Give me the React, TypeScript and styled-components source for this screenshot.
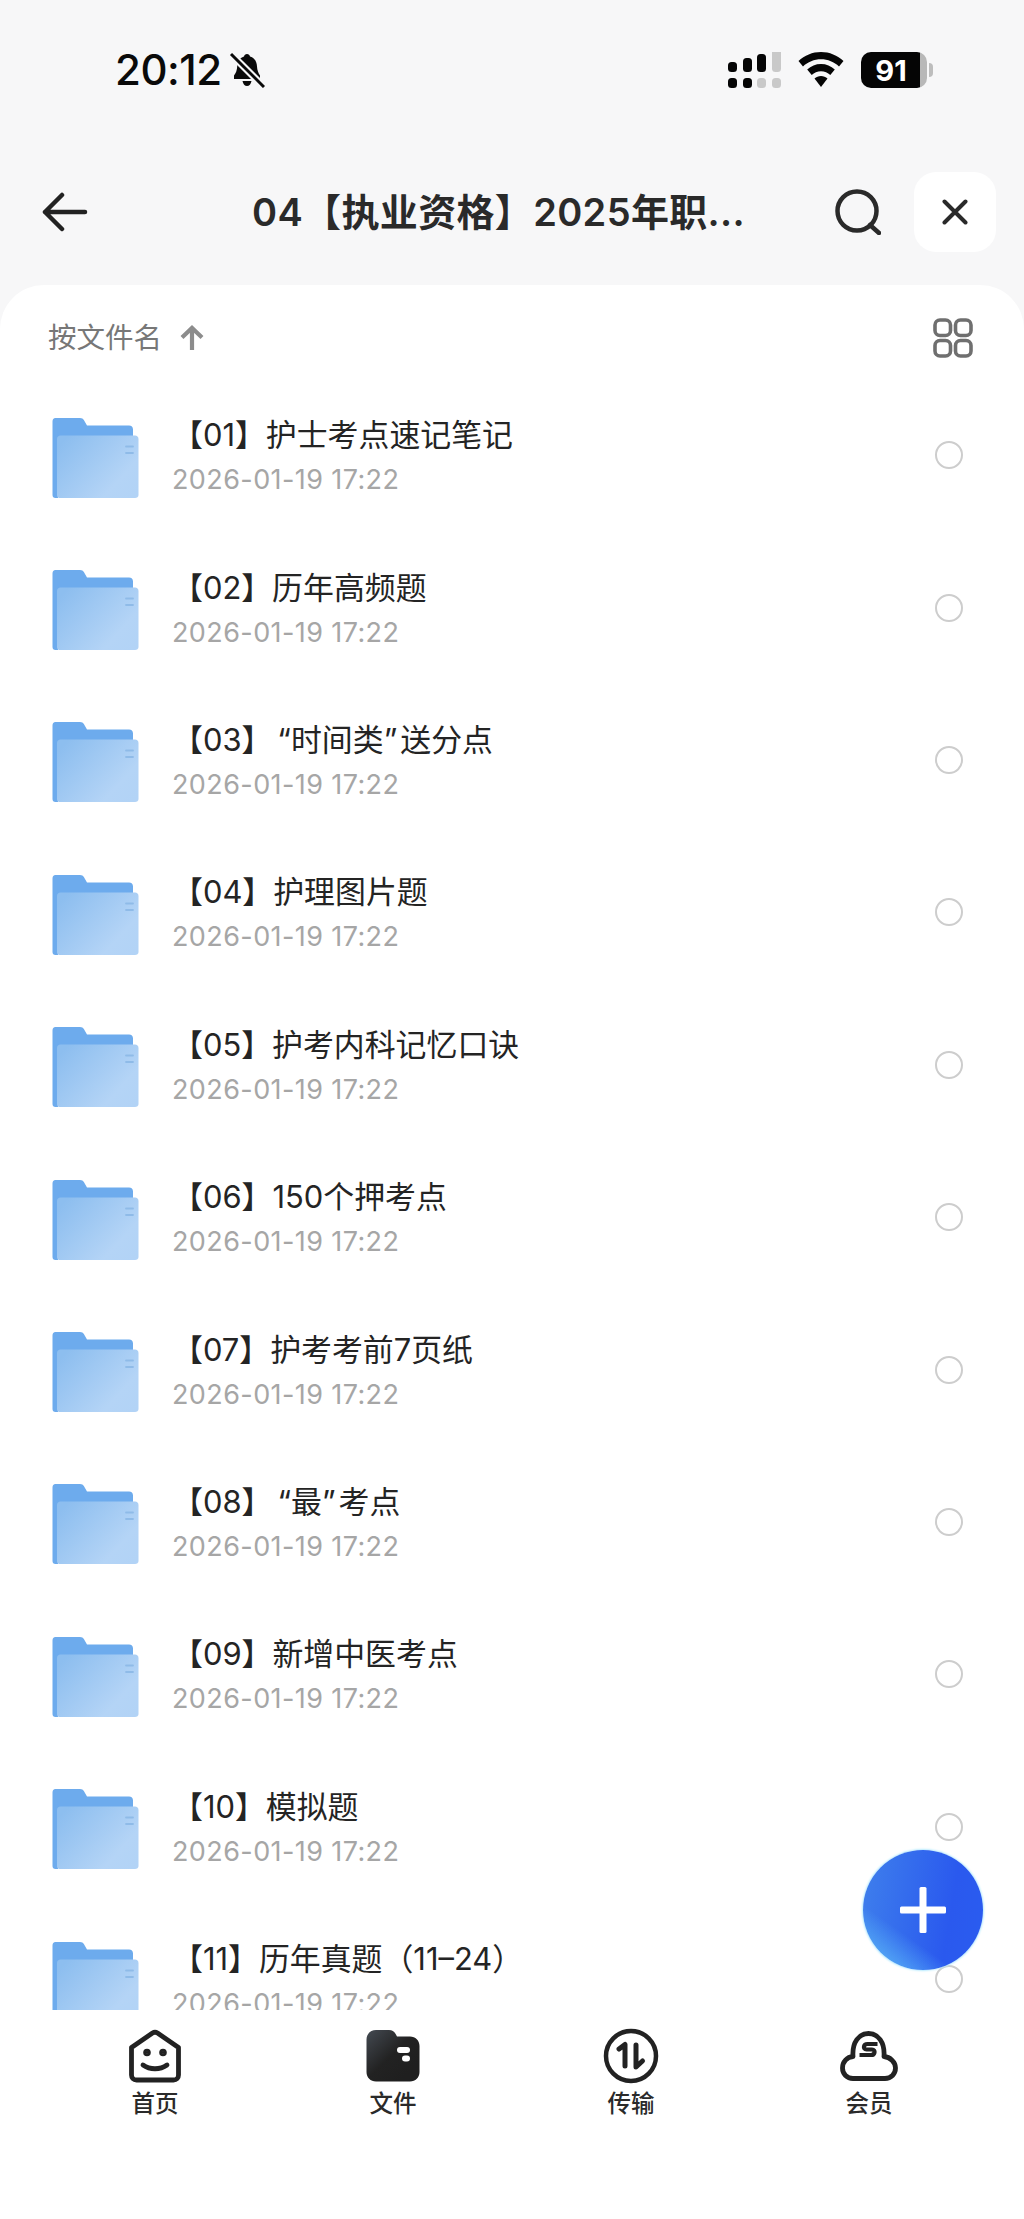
import React from "react";
import styled, { createGlobalStyle } from "styled-components";

const GlobalStyle = createGlobalStyle`
  html, body {
    margin: 0;
    padding: 0;
    background: #f7f7f8;
  }
  * {
    box-sizing: border-box;
  }
`;

const FONT = `Inter, "Noto Sans CJK SC", sans-serif`;

const Page = styled.div`
  position: relative;
  display: flex;
  flex-direction: column;
  width: 1024px;
  height: 2219px;
  overflow: hidden;
  background: #f7f7f8;
  font-family: ${FONT};
  color: #222;
`;

const StatusBar = styled.div`
  display: flex;
  align-items: center;
  height: 140px;
  padding: 0 97px 0 115px;
`;

const Time = styled.div`
  font-size: 42px;
  font-weight: 500;
  line-height: 1;
  letter-spacing: -0.5px;
  color: #0a0a0a;
  margin-right: 7px;
`;

const StatusRight = styled.div`
  display: flex;
  align-items: center;
  gap: 17px;
  margin-left: auto;
`;

const Battery = styled.div`
  position: relative;
  display: flex;
  align-items: center;
  justify-content: center;
  width: 66px;
  height: 36px;
  padding-right: 6px;
  border-radius: 10px;
  background: linear-gradient(90deg, #050505 0, #050505 90%, #b8b8b8 90%);
  color: #fff;
  font-size: 29px;
  font-weight: 700;
  line-height: 1;

  &::after {
    content: "";
    position: absolute;
    right: -6px;
    top: 11px;
    width: 4px;
    height: 14px;
    border-radius: 0 4px 4px 0;
    background: #bdbdbd;
  }
`;

const NavBar = styled.div`
  display: flex;
  align-items: center;
  height: 145px;
  padding: 0 28px 2px 42px;
`;

const Title = styled.div`
  width: 500px;
  margin-left: 164px;
  font-size: 38px;
  font-weight: 600;
  line-height: 1;
  letter-spacing: 0.35px;
  white-space: nowrap;
  color: #2a2a2a;
`;

const SearchButton = styled.div`
  display: flex;
  margin-left: auto;
  margin-right: 33px;
`;

const CloseButton = styled.div`
  display: flex;
  align-items: center;
  justify-content: center;
  width: 82px;
  height: 80px;
  border-radius: 22px;
  background: #fff;
`;

const Sheet = styled.div`
  flex: 1;
  min-height: 0;
  overflow: hidden;
  border-radius: 44px 44px 0 0;
  background: #fff;
`;

const SortBar = styled.div`
  display: flex;
  align-items: center;
  height: 94px;
  padding: 12px 51px 0 48px;
`;

const SortLabel = styled.span`
  font-size: 28.5px;
  line-height: 1;
  color: #777;
  margin-right: 18px;
`;

const ViewToggle = styled.div`
  display: flex;
  margin-left: auto;
`;

const Row = styled.div`
  display: flex;
  align-items: center;
  height: 152.4px;
  padding: 0 61px 0 52px;
`;

const FolderSlot = styled.div`
  display: flex;
  margin-top: 5px;
`;

const RowText = styled.div`
  display: flex;
  flex-direction: column;
  flex: 1;
  margin-left: 33px;
  gap: 14px;
`;

const RowTitle = styled.div`
  font-size: 30.9px;
  line-height: 36px;
  color: #242424;
  white-space: nowrap;
`;

const QuoteMark = styled.span<{ $open?: boolean }>`
  padding: ${(p) => (p.$open ? "0 0 0 5px" : "0 3px 0 0")};
`;

const RowDate = styled.div`
  font-size: 27px;
  line-height: 26px;
  letter-spacing: 0.4px;
  color: #a6a6a6;
`;

const Radio = styled.div`
  width: 28px;
  height: 28px;
  border: 2.5px solid #cdcdcd;
  border-radius: 50%;
`;

const Fab = styled.div`
  position: absolute;
  left: 863px;
  top: 1850px;
  display: flex;
  align-items: center;
  justify-content: center;
  width: 120px;
  height: 120px;
  border-radius: 50%;
  background:
    linear-gradient(35deg, #62c4fa 0%, rgba(98, 196, 250, 0) 32%),
    linear-gradient(100deg, #3f80ec 0%, #2a59ee 70%, #2a5cf0 100%);
  box-shadow: 0 0 2px 1px #b5eaff;
`;

const TabBar = styled.div`
  display: grid;
  grid-template-columns: repeat(4, 238px);
  flex: none;
  height: 209px;
  padding: 17px 36px 0;
  background: #fff;
`;

const Tab = styled.div`
  display: flex;
  flex-direction: column;
  align-items: center;
  gap: 3px;
`;

const TabIcon = styled.div`
  display: flex;
  align-items: center;
  justify-content: center;
  height: 58px;
`;

const TabLabel = styled.div`
  font-size: 23.5px;
  font-weight: 500;
  line-height: 32px;
  color: #2a2a2a;
`;

function BellOff() {
  return (
    <svg width="36" height="36" viewBox="0 0 36 36">
      <path
        d="M18 2c1.600 0 2.700 1 3 2.400 4.600 1.400 6.800 5.400 7 10.100.2 3.900 1.400 6.700 3 9v3.500H5v-3.500c2-2.500 3-5.300 3.200-9C8.400 9.800 10.400 5.800 15 4.400 15.300 3 16.400 2 18 2z"
        fill="#0a0a0a"
      />
      <path d="M13.500 29h9c-.5 3-2.300 5-4.500 5s-4-2-4.500-5z" fill="#0a0a0a" />
      <path d="M2 2l33 33" stroke="#f7f7f8" strokeWidth="7" />
      <path d="M2 2l33 33" stroke="#0a0a0a" strokeWidth="3" />
    </svg>
  );
}

const signalBars = [
  { x: 0, h: 10, c: "#050505" },
  { x: 15, h: 14, c: "#050505" },
  { x: 29, h: 18, c: "#050505" },
  { x: 44, h: 26, c: "#c9c9c9" },
];

function Signal() {
  return (
    <svg width="53" height="36" viewBox="0 0 53 36">
      {signalBars.map((b) => (
        <React.Fragment key={b.x}>
          <rect x={b.x} y={22 - b.h - 2} width="9" height={b.h} rx="3.500" fill={b.c} />
          <rect x={b.x} y="26" width="9" height="10" rx="3.500" fill={b.x > 20 ? "#c9c9c9" : b.c} />
        </React.Fragment>
      ))}
    </svg>
  );
}

function Wifi() {
  return (
    <svg width="46" height="36" viewBox="0 0 46 36">
      <path d="M23 0c8.500 0 16.500 3.400 22.500 9L41 14.500C36.200 10 29.800 7.300 23 7.300S9.800 10 5 14.500L.5 9C6.500 3.400 14.500 0 23 0z" fill="#050505" />
      <path d="M23 12c5.300 0 10 2 13.800 5.500L32.300 23c-2.500-2.300-5.700-3.700-9.300-3.700S16.200 20.700 13.700 23l-4.500-5.500C13 14 17.700 12 23 12z" fill="#050505" />
      <path d="M23 24c2.500 0 4.700.9 6.500 2.400L23 35l-6.500-8.600c1.800-1.500 4-2.400 6.500-2.400z" fill="#050505" />
    </svg>
  );
}

function BackArrow() {
  return (
    <svg width="46" height="40" viewBox="0 0 46 40" fill="none" stroke="#222" strokeWidth="4.500" strokeLinecap="round" strokeLinejoin="round">
      <path d="M43 20H3M20 3L3 20l17 17" />
    </svg>
  );
}

function SearchIcon() {
  return (
    <svg width="46" height="46" viewBox="0 0 46 46" fill="none" stroke="#2a2a2a" strokeWidth="4.500" strokeLinecap="round">
      <circle cx="22" cy="22" r="19.500" />
      <path d="M35 36l9 8" />
    </svg>
  );
}

function CloseIcon() {
  return (
    <svg width="26" height="26" viewBox="0 0 26 26" fill="none" stroke="#2a2a2a" strokeWidth="4" strokeLinecap="round">
      <path d="M2.500 2.500l21 21M23.500 2.500l-21 21" />
    </svg>
  );
}

function SortArrow() {
  return (
    <svg width="24" height="26" viewBox="0 0 24 26" fill="none" stroke="#8c8c8c" strokeWidth="4.200">
      <path d="M12 25V4M2 12.500L12 3l10 9.500" />
    </svg>
  );
}

function GridIcon() {
  return (
    <svg width="40" height="40" viewBox="0 0 40 40" fill="none" stroke="#6f6f6f" strokeWidth="3.600">
      <rect x="2" y="2" width="15.500" height="15.500" rx="5" />
      <rect x="22.500" y="2" width="15.500" height="15.500" rx="5" />
      <rect x="2" y="22.500" width="15.500" height="15.500" rx="5" />
      <rect x="22.500" y="22.500" width="15.500" height="15.500" rx="5" />
    </svg>
  );
}

function FolderIcon({ id }: { id: number }) {
  return (
    <svg width="87" height="80" viewBox="0 0 87 80">
      <defs>
        <linearGradient id={`front${id}`} x1="0" y1="0.2" x2="1" y2="0.9">
          <stop offset="0" stopColor="#8dbeef" />
          <stop offset="0.75" stopColor="#b4d4f6" />
          <stop offset="1" stopColor="#b2d3f6" />
        </linearGradient>
      </defs>
      <path
        d="M3.500 0H28c2 0 3 .8 4 2.300L35 7.500h42c2.500 0 4 1.500 4 4V30H6v50H3.500C1.500 80 .5 79 .5 77V3.500C.5 1.500 1.500 0 3.500 0z"
        fill="#6dabed"
      />
      <path
        d="M8.500 17.500H83c2 0 3.500 1.500 3.500 3.500v56c0 2-1.500 3-3.500 3H7.500C6 80 5 79 5 77V21c0-2 1.500-3.500 3.500-3.500z"
        fill={`url(#front${id})`}
      />
      <path d="M74 28.500h7M74 35h7" stroke="#8fbbe8" strokeWidth="1.800" strokeLinecap="round" />
    </svg>
  );
}

function PlusIcon() {
  return (
    <svg width="46" height="46" viewBox="0 0 46 46" fill="#fff">
      <rect x="19.500" y="0" width="7" height="46" rx="1.500" />
      <rect x="0" y="19.500" width="46" height="7" rx="1.500" />
    </svg>
  );
}

function HomeTab() {
  return (
    <svg width="54" height="54" viewBox="0 0 54 54" fill="none" stroke="#222" strokeWidth="4.800" strokeLinejoin="round" strokeLinecap="round">
      <path d="M3.500 18.500L24.500 4c1.600-1 3.400-1 5 0l21 14.500V46c0 3-2 5-5 5H8.500c-3 0-5-2-5-5z" />
      <path d="M15 36c7 5 17 5 24 0" />
      <circle cx="19" cy="23.500" r="1.400" fill="#222" />
      <circle cx="35" cy="23.500" r="1.400" fill="#222" />
    </svg>
  );
}

function FilesTab() {
  return (
    <svg width="54" height="52" viewBox="0 0 54 52">
      <defs>
        <linearGradient id="filesFill" x1="0" y1="0" x2="0.8" y2="0.8">
          <stop offset="0" stopColor="#444a52" />
          <stop offset="0.6" stopColor="#222222" />
          <stop offset="1" stopColor="#1f1f1f" />
        </linearGradient>
      </defs>
      <path
        d="M10 0h13c4 0 6 2 8 6.500h13c5.500 0 9.500 4 9.500 9.500v26c0 5.500-4 9.500-9.500 9.500H10C4.500 51.500.5 47.500.5 42V9.500C.5 4 4.500 0 10 0z"
        fill="url(#filesFill)"
      />
      <rect x="31" y="17" width="13" height="6" rx="3" fill="#fff" />
      <rect x="36" y="25.500" width="8" height="6" rx="3" fill="#fff" />
    </svg>
  );
}

function TransferTab() {
  return (
    <svg width="56" height="56" viewBox="0 0 56 56" fill="none" stroke="#222" strokeLinecap="round" strokeLinejoin="round">
      <circle cx="28" cy="28" r="25" strokeWidth="4.500" />
      <path d="M16 21l6-4.500V38" strokeWidth="5" />
      <path d="M33 17v22l6.500-6" strokeWidth="5" />
    </svg>
  );
}

function MemberTab() {
  return (
    <svg width="58" height="50" viewBox="0 0 58 50" fill="none" stroke="#222" strokeLinecap="round" strokeLinejoin="round">
      <path d="M13 47.500C7 47.500 2.500 43 2.500 37c0-6 4.500-11 10.500-11.500C12 11 19 2.500 28.500 2.500S45 11 44 25.500c6 .5 11.500 5.500 11.500 11.500 0 6-4.500 10.500-10.500 10.500z" strokeWidth="4.800" />
      <path d="M37.500 13H27.500c-2 0-3.200 1-3.500 2.500-.3 1.500.5 3 2.500 3h5.500c2 0 2.800 1.500 2.500 3-.3 1.500-1.500 2.500-3.500 2.500H19.500" strokeWidth="4.200" strokeLinecap="butt" />
    </svg>
  );
}

const rows: React.ReactNode[] = [
  "【01】护士考点速记笔记",
  "【02】历年高频题",
  <>
    【03】<QuoteMark $open>“</QuoteMark>时间类<QuoteMark>”</QuoteMark>送分点
  </>,
  "【04】护理图片题",
  "【05】护考内科记忆口诀",
  "【06】150个押考点",
  "【07】护考考前7页纸",
  <>
    【08】<QuoteMark $open>“</QuoteMark>最<QuoteMark>”</QuoteMark>考点
  </>,
  "【09】新增中医考点",
  "【10】模拟题",
  "【11】历年真题（11–24）",
];

const tabs = [
  { label: "首页", icon: <HomeTab /> },
  { label: "文件", icon: <FilesTab /> },
  { label: "传输", icon: <TransferTab /> },
  { label: "会员", icon: <MemberTab /> },
];

function App() {
  return (
    <Page lang="zh-CN">
      <GlobalStyle />
      <StatusBar>
        <Time>20:12</Time>
        <BellOff />
        <StatusRight>
          <Signal />
          <Wifi />
          <Battery>91</Battery>
        </StatusRight>
      </StatusBar>
      <NavBar>
        <BackArrow />
        <Title>04【执业资格】2025年职...</Title>
        <SearchButton>
          <SearchIcon />
        </SearchButton>
        <CloseButton>
          <CloseIcon />
        </CloseButton>
      </NavBar>
      <Sheet>
        <SortBar>
          <SortLabel>按文件名</SortLabel>
          <SortArrow />
          <ViewToggle>
            <GridIcon />
          </ViewToggle>
        </SortBar>
        {rows.map((name, i) => (
          <Row key={i}>
            <FolderSlot>
              <FolderIcon id={i} />
            </FolderSlot>
            <RowText>
              <RowTitle>{name}</RowTitle>
              <RowDate>2026-01-19 17:22</RowDate>
            </RowText>
            <Radio />
          </Row>
        ))}
      </Sheet>
      <TabBar>
        {tabs.map((t) => (
          <Tab key={t.label}>
            <TabIcon>{t.icon}</TabIcon>
            <TabLabel>{t.label}</TabLabel>
          </Tab>
        ))}
      </TabBar>
      <Fab>
        <PlusIcon />
      </Fab>
    </Page>
  );
}

export default App;
